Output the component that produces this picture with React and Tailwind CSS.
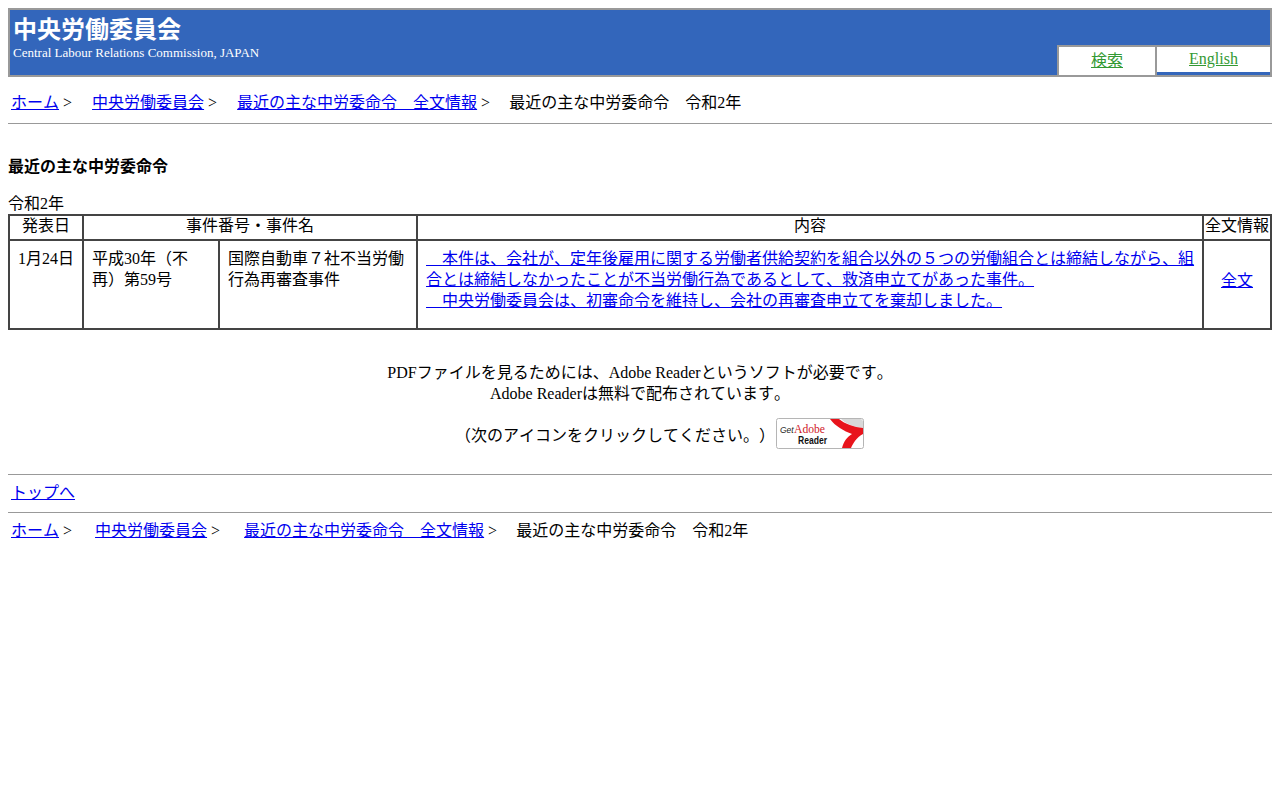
// App.jsx
const FONT = "font-['Liberation_Serif','Noto_Sans_CJK_JP',serif]";

function AdobeBadge() {
  return (
    <svg width="88" height="31" viewBox="0 0 88 31" className="block shrink-0">
      <rect x="0.5" y="0.5" width="87" height="30" rx="2" fill="#fff" stroke="#b5b5b5" />
      <path d="M65 1 L84 1 Q87 1 87 4 L87 10 C78 9 70 6 65 1 Z" fill="#d8d8d8" />
      <path d="M54 1 L63 1 C69 6 78 9 87 10 L87 16 C81 19 77 25 75 30 L66 30 C68 23 71 19 76 16 C68 13 59 8 54 1 Z" fill="#e8141c" />
      <text x="4" y="15" fontSize="8.5" fontStyle="italic" fontFamily="Liberation Sans" fill="#222">Get</text>
      <text x="18" y="15" fontSize="13" textLength="31" lengthAdjust="spacingAndGlyphs" fontFamily="Liberation Serif" fill="#d0202a">Adobe</text>
      <text x="22" y="26" fontSize="10.5" textLength="29" lengthAdjust="spacingAndGlyphs" fontWeight="bold" fontFamily="Liberation Sans" fill="#111">Reader</text>
    </svg>
  );
}

function Crumbs({ wide }) {
  const link = "text-[#0000ee] underline";
  return (
    <div className="pl-[3px] leading-[20px]">
      <a href="#" className={link}>ホーム</a>
      {" > "}
      <span className={wide ? "ml-[19px]" : "ml-[16px]"}><a href="#" className={link}>中央労働委員会</a></span>
      {" > "}
      <span className={wide ? "ml-[20px]" : "ml-[16px]"}><a href="#" className={link}>最近の主な中労委命令　全文情報</a></span>
      {" > "}
      <span className="ml-[15px]">最近の主な中労委命令　令和2年</span>
    </div>
  );
}

export default function App() {
  const cell = "border-2 border-[#444] align-top";
  const link = "text-[#0000ee] underline";

  return (
    <div className={`${FONT} [text-spacing-trim:space-all] [font-kerning:none] bg-white text-black text-base min-h-screen px-2 pt-2`}>
      {/* header */}
      <div className="h-[69px] bg-[#3366bb] border-2 border-[#999] flex justify-between">
        <div className="pl-[3px] text-white">
          <div className="text-2xl font-bold leading-[30px] mt-[5px]">中央労働委員会</div>
          <div className="text-[13px] leading-[15px] [font-kerning:normal]">Central Labour Relations Commission, JAPAN</div>
        </div>
        <div className="self-end flex text-center">
          <div className="w-[98px] h-[30px] bg-white border-l-2 border-t-2 border-[#999] leading-[24px] pt-[2px]">
            <a href="#" className="text-[#339933] underline">検索</a>
          </div>
          <div className="w-[115px] h-[30px] bg-white border-l-2 border-t-2 border-[#999] leading-[20px] pt-[2px] flex flex-col justify-between">
            <a href="#" className="text-[#339933] underline">English</a>
            <div className="h-[3px] bg-[#3366bb]" />
          </div>
        </div>
      </div>

      <div className="mt-4"><Crumbs /></div>
      <hr className="mt-[10px] border-t border-[#999]" />

      <h2 className="mt-[33px] font-bold leading-[20px]">最近の主な中労委命令</h2>
      <p className="mt-[17px] leading-[20px]">令和2年</p>

      <table className="w-full table-fixed border-collapse">
        <colgroup>
          <col className="w-[74px]" />
          <col className="w-[136px]" />
          <col className="w-[198px]" />
          <col />
          <col className="w-[68px]" />
        </colgroup>
        <thead>
          <tr className="h-[25px] leading-[20px] text-center font-normal">
            <th className={`${cell} font-normal`}>発表日</th>
            <th colSpan={2} className={`${cell} font-normal`}>事件番号・事件名</th>
            <th className={`${cell} font-normal`}>内容</th>
            <th className={`${cell} font-normal`}>全文情報</th>
          </tr>
        </thead>
        <tbody>
          <tr className="h-[89px] leading-[21px]">
            <td className={`${cell} text-center pt-[7px]`}>1月24日</td>
            <td className={`${cell} px-2 pt-[7px]`}>平成30年（不再）第59号</td>
            <td className={`${cell} px-2 pt-[7px]`}>国際自動車７社不当労働行為再審査事件</td>
            <td className={`${cell} pl-2 pr-[6px] pt-[7px]`}>
              <a href="#" className={link}>
                {"　"}本件は、会社が、定年後雇用に関する労働者供給契約を組合以外の５つの労働組合とは締結しながら、組合とは締結しなかったことが不当労働行為であるとして、救済申立てがあった事件。
                <br />
                {"　"}中央労働委員会は、初審命令を維持し、会社の再審査申立てを棄却しました。
              </a>
            </td>
            <td className="border-2 border-[#444] text-center align-middle pb-[8px]">
              <a href="#" className={link}>全文</a>
            </td>
          </tr>
        </tbody>
      </table>

      {/* reader notice */}
      <div className="text-center mt-[32px] leading-[21px]">
        <p>PDFファイルを見るためには、Adobe Readerというソフトが必要です。</p>
        <p>Adobe Readerは無料で配布されています。</p>
        <p className="mt-[14px] pl-[39px] flex justify-center items-center gap-[1px]">
          <span className="pt-[4px]">（次のアイコンをクリックしてください。）</span>
          <AdobeBadge />
        </p>
      </div>

      <hr className="mt-[25px] border-t border-[#999]" />
      <div className="pl-[3px] mt-[8px] leading-[20px]">
        <a href="#" className={link}>トップへ</a>
      </div>
      <hr className="mt-[9px] border-t border-[#999]" />
      <div className="mt-[8px]"><Crumbs wide /></div>
    </div>
  );
}
